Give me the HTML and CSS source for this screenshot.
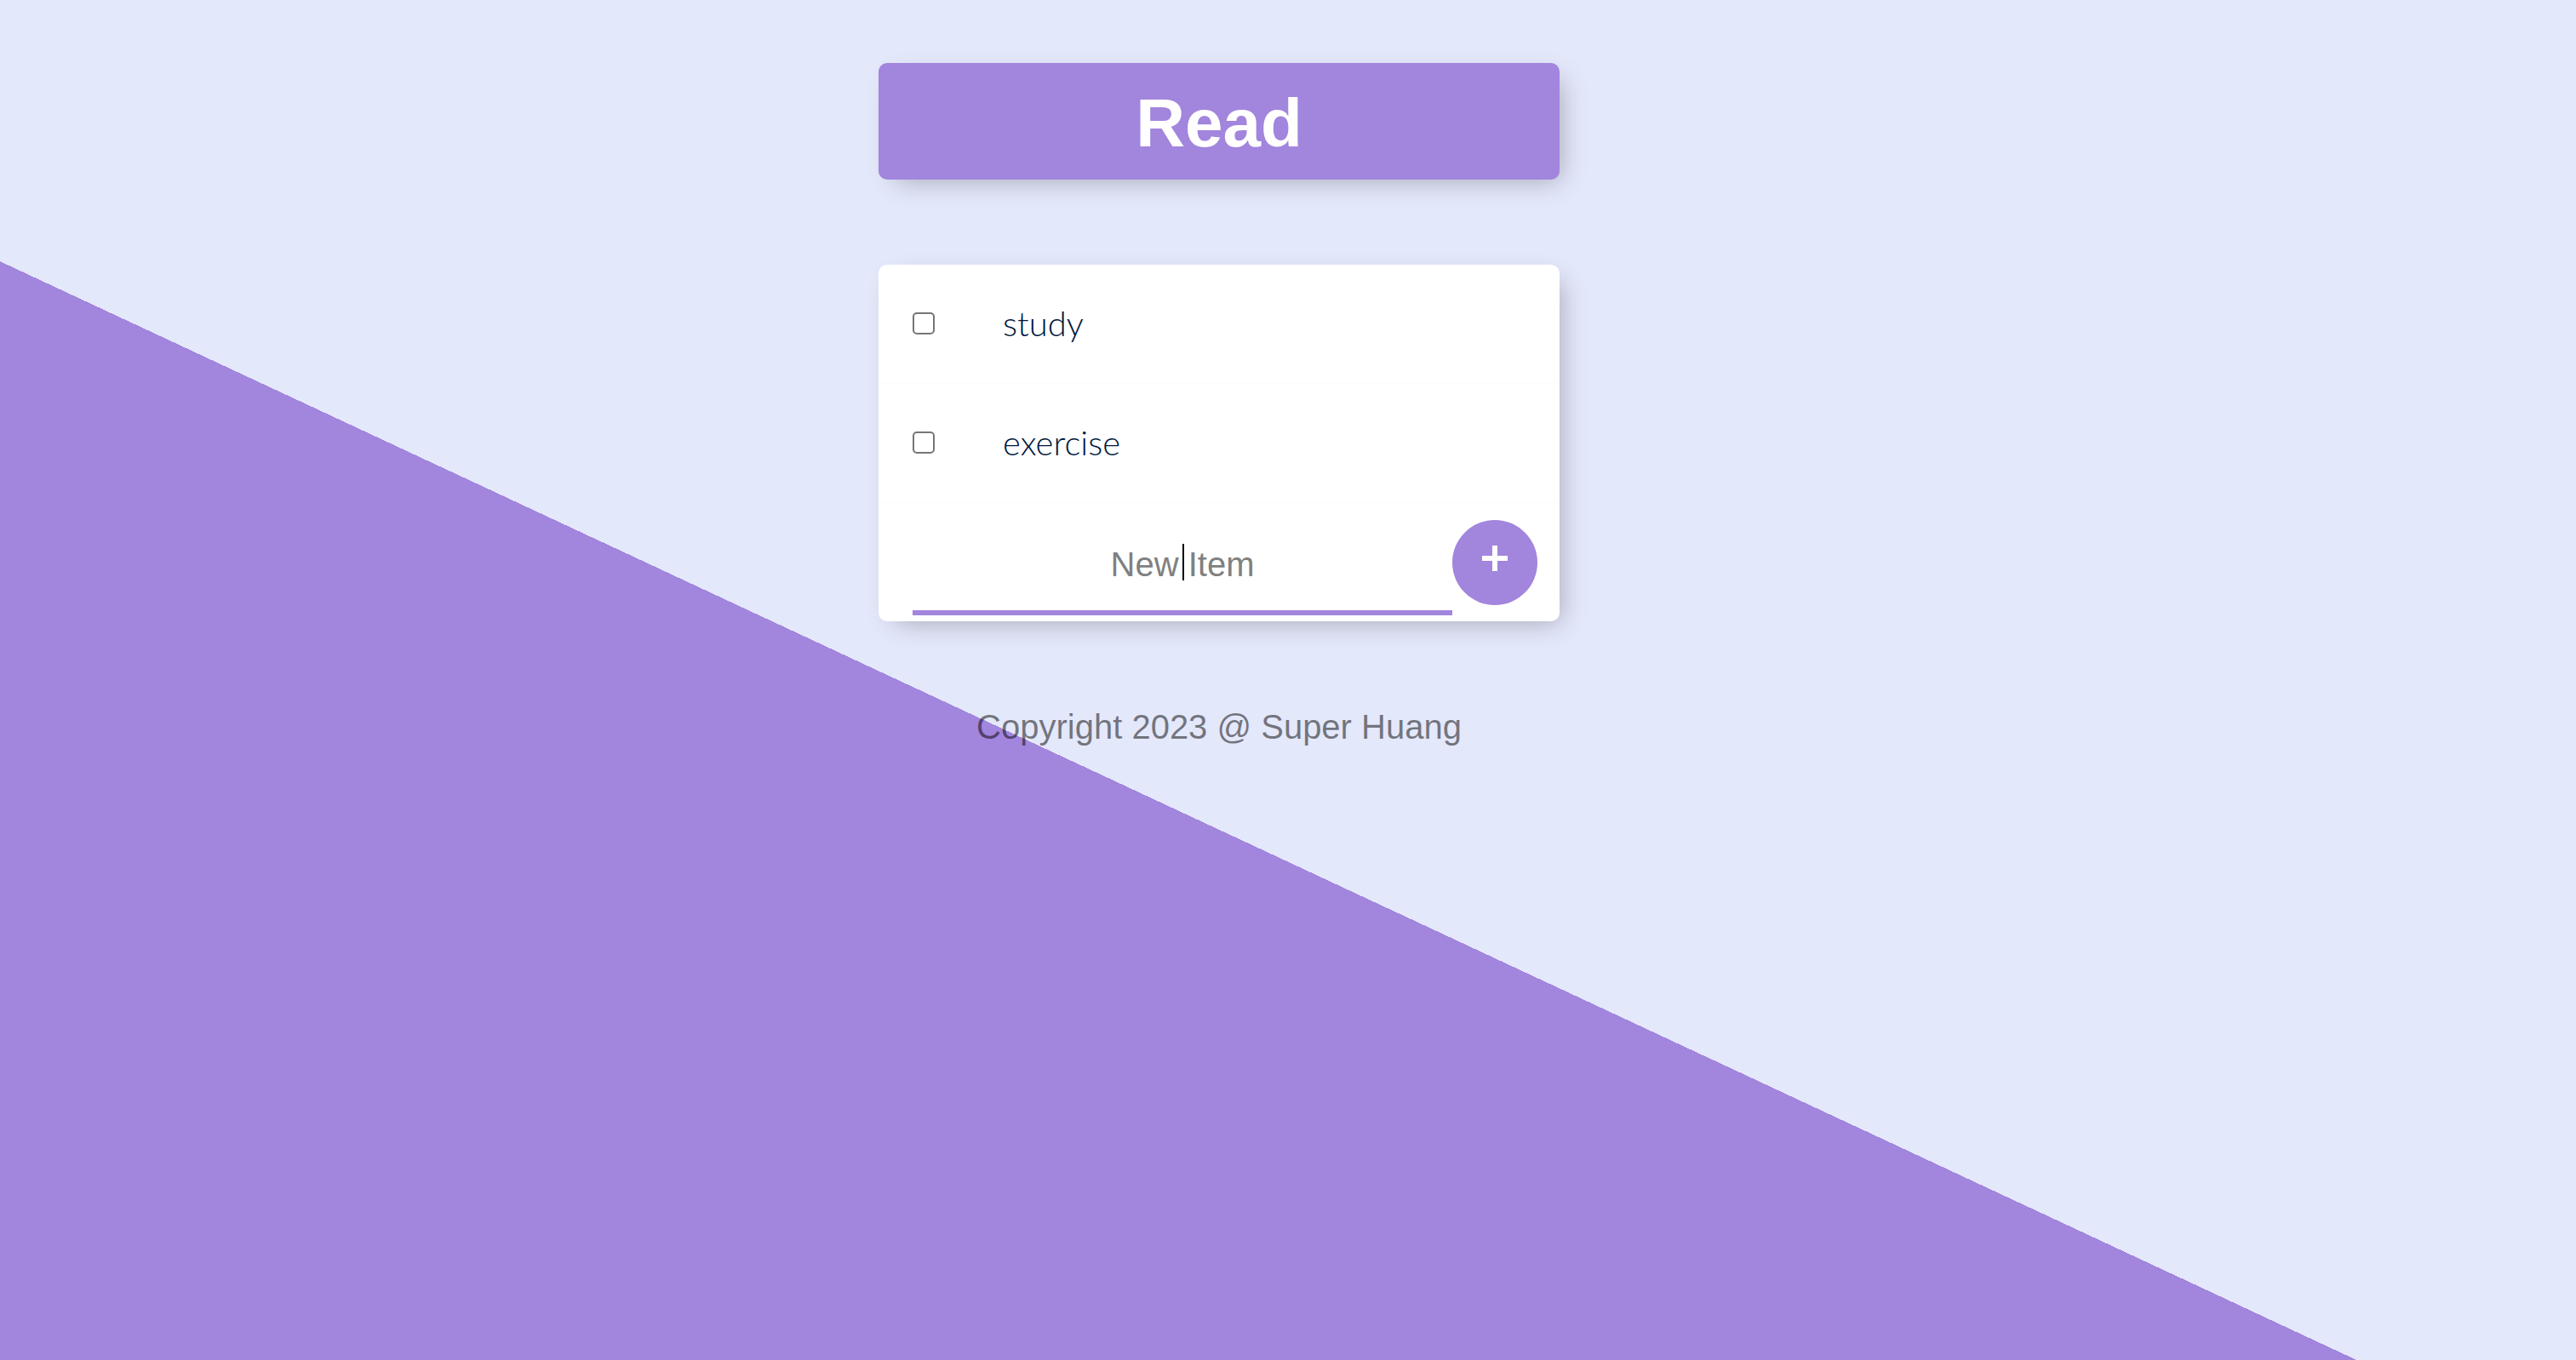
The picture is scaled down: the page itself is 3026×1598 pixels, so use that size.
FILE: index.html
```html
<!DOCTYPE html>
<html lang="en">
<head>
<meta charset="utf-8">
<title>To-Do List</title>
<link rel="stylesheet" href="styles.css">
</head>
<body>
<div class="page">
  <div class="box heading"><h1>Read</h1></div>
  <div class="box list">
    <div class="item"><input type="checkbox" class="check"><p class="item-text">study</p></div>
    <div class="item"><input type="checkbox" class="check"><p class="item-text">exercise</p></div>
    <form class="item-form" onsubmit="return false">
      <div class="field">
        <input type="text" class="new-item" placeholder="New Item" autocomplete="off">
        <span class="caret"></span>
      </div>
      <button type="submit" class="add-btn" aria-label="Add">
        <svg width="30" height="30" viewBox="0 0 30 30"><path d="M15 0V30M0 15H30" stroke="#fff" stroke-width="6"/></svg>
      </button>
    </form>
  </div>
  <footer class="footer"><p>Copyright 2023 @ Super Huang</p></footer>
</div>
</body>
</html>
```
FILE: styles.css
```css
html {
  height: 100%;
  background-color: #e4e8fb;
  background-image: linear-gradient(25deg, #a285dd 42.9%, #e4e8fb 42.9%);
}

body {
  margin: 0;
  padding-right: 162px;
  font-family: "Liberation Sans", Arial, sans-serif;
}

.page {
  width: 800px;
  margin: 0 auto;
  padding-top: 74px;
}

.box {
  border-radius: 10px;
  box-shadow: 10px 10px 30px -10px rgba(0, 0, 0, 0.3);
}

.heading {
  height: 137px;
  background-color: #a285dd;
  display: flex;
  align-items: center;
  justify-content: center;
}

.heading h1 {
  margin: 0;
  padding-top: 5px;
  color: #fff;
  font-size: 80px;
  font-weight: 700;
  line-height: 1;
}

.list {
  margin-top: 100px;
  background: #fff;
}

.item {
  height: 140px;
  box-sizing: border-box;
  display: flex;
  align-items: center;
  border-bottom: 2px solid #fdfdfd;
}

.check {
  appearance: none;
  -webkit-appearance: none;
  flex: none;
  width: 26px;
  height: 26px;
  margin: 0 40px;
  box-sizing: border-box;
  border: 2px solid #767676;
  border-radius: 5px;
  background: #fff;
}

.item-text {
  margin: 0;
  padding: 0 40px;
  font-family: Lato, "Liberation Sans", sans-serif;
  font-weight: 300;
  font-size: 40px;
  color: #00173d;
}

.item-form {
  display: flex;
  align-items: center;
  padding: 12px 0 7px 40px;
}

.field {
  position: relative;
  width: 634px;
  height: 120px;
  flex: none;
}

.new-item {
  width: 100%;
  height: 100%;
  box-sizing: border-box;
  padding: 0 4px;
  border: none;
  outline: none;
  background: transparent;
  text-align: center;
  font-family: "Liberation Sans", Arial, sans-serif;
  font-size: 40px;
  font-weight: 400;
  color: #222;
  box-shadow: inset 0 -6px 0 0 #a285dd;
}

.new-item::placeholder {
  color: grey;
  opacity: 1;
}

.caret {
  position: absolute;
  left: 317px;
  top: 36px;
  width: 2px;
  height: 43px;
  background: #000;
}

.add-btn {
  flex: none;
  width: 100px;
  height: 100px;
  margin: 0 0 4px 0;
  padding: 0 0 11px 0;
  box-sizing: border-box;
  border: 0;
  border-radius: 50%;
  background-color: #a285dd;
  display: flex;
  align-items: center;
  justify-content: center;
}

.add-btn svg {
  display: block;
}

.footer {
  margin-top: 102px;
  text-align: center;
  color: rgba(0, 0, 0, 0.5);
  font-size: 40px;
}

.footer p {
  margin: 0;
}
```
